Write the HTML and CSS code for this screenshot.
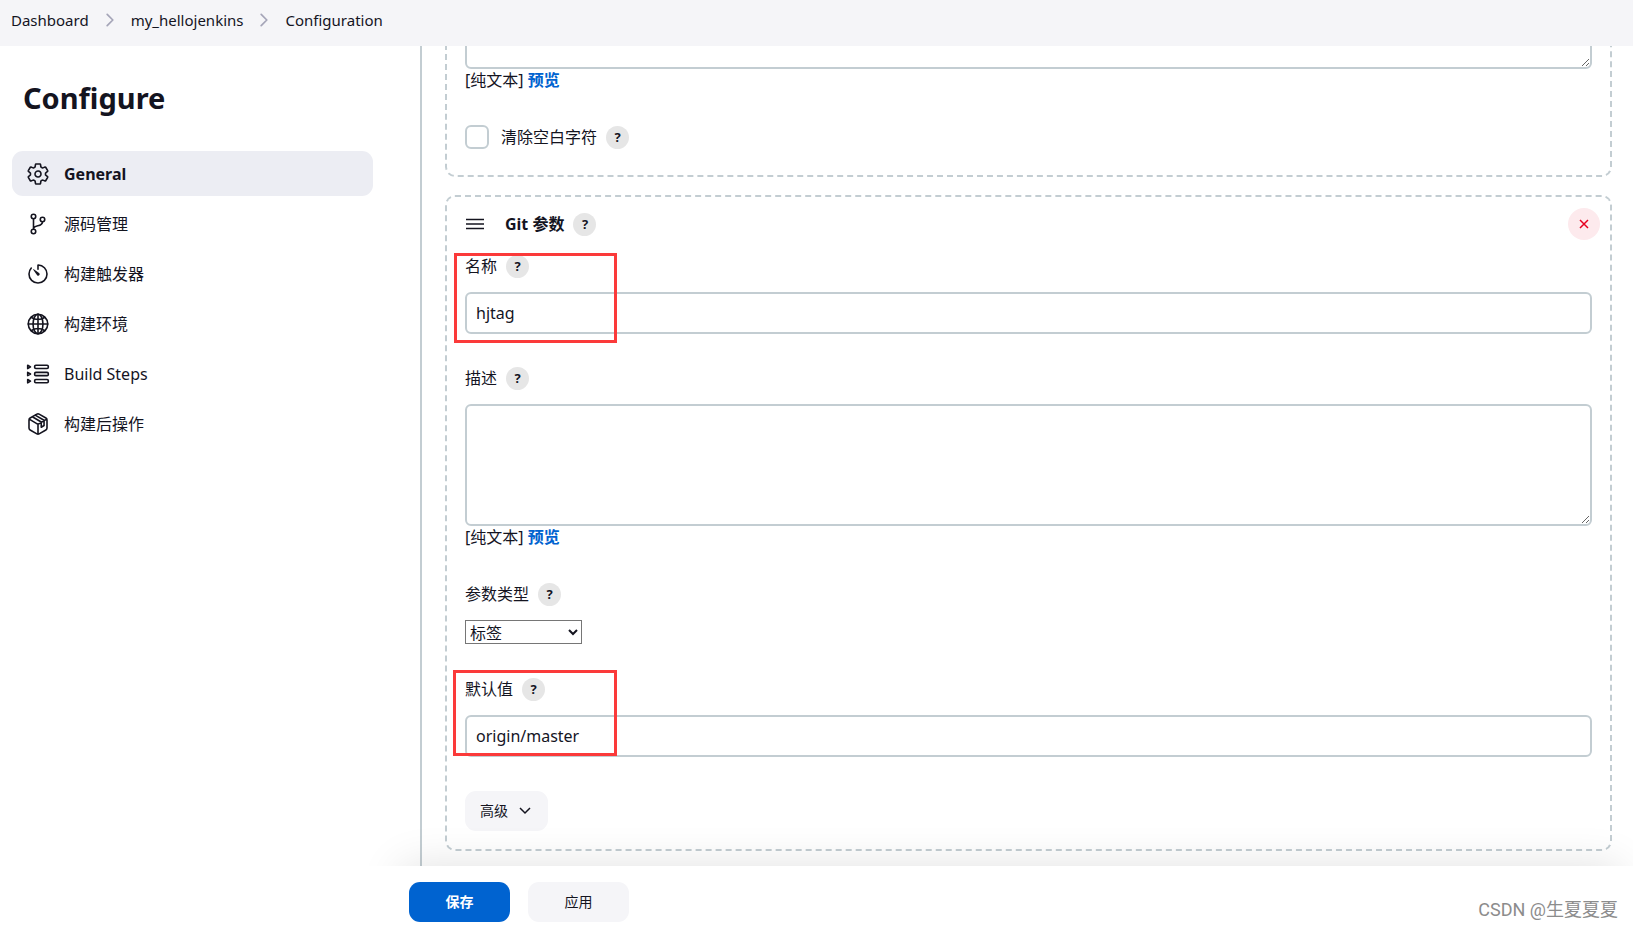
FILE: index.html
```html
<!DOCTYPE html>
<html lang="zh-CN">
<head>
<meta charset="utf-8">
<title>my_hellojenkins Config</title>
<link rel="stylesheet" href="styles.css">
</head>
<body>
<nav class="breadcrumbs" aria-label="Breadcrumb">
  <a href="#">Dashboard</a>
  <svg class="crumb-sep" viewBox="0 0 512 512" aria-hidden="true"><path d="M184 112l144 144-144 144"/></svg>
  <a href="#">my_hellojenkins</a>
  <svg class="crumb-sep" viewBox="0 0 512 512" aria-hidden="true"><path d="M184 112l144 144-144 144"/></svg>
  <a href="#">Configuration</a>
</nav>

<div class="page">
  <aside class="sidebar">
    <h1>Configure</h1>
    <nav class="tasks">
      <a class="task task-active" href="#">
        <svg class="icon" viewBox="0 0 512 512" aria-hidden="true"><path d="M262.29 192.31a64 64 0 1057.4 57.4 64.13 64.13 0 00-57.4-57.4zM416.39 256a154.34 154.34 0 01-1.53 20.79l45.21 35.46a10.81 10.81 0 012.45 13.75l-42.77 74a10.81 10.81 0 01-13.14 4.59l-44.9-18.08a16.11 16.11 0 00-15.17 1.75A164.48 164.48 0 01325 400.8a15.94 15.94 0 00-8.82 12.14l-6.73 47.89a11.08 11.08 0 01-10.68 9.17h-85.54a11.11 11.11 0 01-10.69-8.87l-6.72-47.82a16.07 16.07 0 00-9-12.22 155.3 155.3 0 01-21.46-12.57 16 16 0 00-15.11-1.71l-44.89 18.07a10.81 10.81 0 01-13.14-4.58l-42.77-74a10.8 10.8 0 012.45-13.75l38.21-30a16.05 16.05 0 006-14.08c-.36-4.17-.58-8.33-.58-12.5s.21-8.27.58-12.35a16 16 0 00-6.07-13.94l-38.19-30A10.81 10.81 0 0149.48 186l42.77-74a10.81 10.81 0 0113.14-4.59l44.9 18.08a16.11 16.11 0 0015.17-1.75A164.48 164.48 0 01187 111.2a15.94 15.94 0 008.82-12.14l6.73-47.89A11.08 11.08 0 01213.23 42h85.54a11.11 11.11 0 0110.69 8.87l6.72 47.82a16.07 16.07 0 009 12.22 155.3 155.3 0 0121.46 12.57 16 16 0 0015.11 1.71l44.89-18.07a10.81 10.81 0 0113.14 4.58l42.77 74a10.8 10.8 0 01-2.45 13.75l-38.21 30a16.05 16.05 0 00-6.05 14.08c.33 4.14.55 8.3.55 12.47z"/></svg>
        <span>General</span>
      </a>
      <a class="task" href="#">
        <svg class="icon" viewBox="0 0 512 512" aria-hidden="true"><circle cx="160" cy="96" r="48"/><circle cx="160" cy="416" r="48"/><circle cx="352" cy="160" r="48"/><path d="M160 368V144M352 208c0 128-192 48-192 160"/></svg>
        <span>源码管理</span>
      </a>
      <a class="task" href="#">
        <svg class="icon" viewBox="0 0 512 512" aria-hidden="true"><path d="M112.91 128A191.85 191.85 0 0064 254c-1.18 106.35 85.65 193.8 192 194 106.2.2 192-85.83 192-192 0-104.54-83.55-189.61-187.5-192a4.36 4.36 0 00-4.5 4.37V152"/><path class="solid" d="M233.38 278.63l-79-113a8.13 8.13 0 0111.32-11.32l113 79a32.5 32.5 0 01-37.25 53.26 33.21 33.21 0 01-8.07-7.94z"/></svg>
        <span>构建触发器</span>
      </a>
      <a class="task" href="#">
        <svg class="icon" viewBox="0 0 512 512" aria-hidden="true"><circle cx="256" cy="256" r="208"/><ellipse cx="256" cy="256" rx="106" ry="208"/><path d="M256 48v416M48 256h416M117 117c38 27 86 43 139 43s101-16 139-43M117 395c38-27 86-43 139-43s101 16 139 43"/></svg>
        <span>构建环境</span>
      </a>
      <a class="task" href="#">
        <svg class="icon" viewBox="0 0 512 512" aria-hidden="true"><path d="M36 68l60 36-60 36zM36 220l60 36-60 36zM36 372l60 36-60 36z"/><rect x="184" y="70" width="292" height="68" rx="26"/><rect x="184" y="222" width="292" height="68" rx="26"/><rect x="184" y="374" width="292" height="68" rx="26"/></svg>
        <span>Build Steps</span>
      </a>
      <a class="task" href="#">
        <svg class="icon" viewBox="0 0 512 512" aria-hidden="true"><path d="M448 341V171a48 48 0 00-24-42L280 46a48 48 0 00-48 0L88 129a48 48 0 00-24 42v170a48 48 0 0024 42l144 83a48 48 0 0048 0l144-83a48 48 0 0024-42zM69 153l187 110 187-110M256 463V263M135 102l190 112v112l60-38V177L195 67"/></svg>
        <span>构建后操作</span>
      </a>
    </nav>
  </aside>

  <main class="content">
    <section class="group group-string">
      <div class="field">
        <textarea class="text-box text-area" aria-label="描述"></textarea>
        <p class="format-note">[纯文本] <a href="#">预览</a></p>
      </div>
      <div class="check-row">
        <input class="check" type="checkbox" id="trim">
        <label for="trim">清除空白字符</label>
        <button class="help" type="button">?</button>
      </div>
    </section>

    <section class="group group-git">
      <header class="group-head">
        <svg class="drag-handle" viewBox="0 0 18 12" aria-hidden="true"><path d="M0 1.5h18M0 6h18M0 10.5h18"/></svg>
        <h2>Git 参数</h2>
        <button class="help" type="button">?</button>
        <button class="remove" type="button" aria-label="删除">
          <svg viewBox="0 0 16 16" aria-hidden="true"><path d="M4 4l8 8M12 4l-8 8"/></svg>
        </button>
      </header>
      <div class="field marked marked-name">
        <div class="label-row"><label for="name">名称</label><button class="help" type="button">?</button></div>
        <input class="text-box" type="text" id="name" value="hjtag">
      </div>
      <div class="field">
        <div class="label-row"><label for="desc">描述</label><button class="help" type="button">?</button></div>
        <textarea class="text-box text-area" id="desc"></textarea>
        <p class="format-note">[纯文本] <a href="#">预览</a></p>
      </div>
      <div class="field field-type">
        <div class="label-row"><label for="type">参数类型</label><button class="help" type="button">?</button></div>
        <select class="type-select" id="type"><option>标签</option></select>
      </div>
      <div class="field marked marked-default">
        <div class="label-row"><label for="default">默认值</label><button class="help" type="button">?</button></div>
        <input class="text-box" type="text" id="default" value="origin/master">
      </div>
      <button class="btn btn-advanced" type="button">高级
        <svg viewBox="0 0 16 16" aria-hidden="true"><path d="M3 5l5 5 5-5"/></svg>
      </button>
    </section>
  </main>
</div>

<footer class="bottom">
  <div class="bottom-bar">
    <button class="btn btn-primary" type="submit">保存</button>
    <button class="btn btn-apply" type="button">应用</button>
    <span class="credit">CSDN @生夏夏夏</span>
  </div>
</footer>
</body>
</html>
```
FILE: styles.css
```css
*,
*::before,
*::after {
  box-sizing: border-box;
}

body {
  display: flex;
  flex-direction: column;
  height: 100vh;
  margin: 0;
  overflow: hidden;
  background: #fff;
  color: #14141f;
  font: 16px/24px "Noto Sans", "Noto Sans CJK SC", sans-serif;
}

a {
  color: inherit;
  text-decoration: none;
}

button,
input,
textarea,
select {
  margin: 0;
  color: inherit;
  font: inherit;
}

h1,
h2,
p {
  margin: 0;
}

.breadcrumbs {
  display: flex;
  flex: none;
  align-items: center;
  gap: 11px;
  padding: 8px 11px 14px;
  background: #f5f5f8;
  font-size: 15px;
}

.crumb-sep {
  width: 20px;
  height: 20px;
  fill: none;
  stroke: #a5a5b8;
  stroke-width: 44;
  stroke-linecap: round;
  stroke-linejoin: round;
}

.page {
  display: flex;
  flex: 1;
  min-height: 0;
}

.sidebar {
  flex: none;
  width: 420px;
  padding: 32px 47px 0 12px;
}

h1 {
  padding-left: 11px;
  font-size: 29px;
  line-height: 40px;
}

.tasks {
  display: flex;
  flex-direction: column;
  gap: 5px;
  margin-top: 33px;
}

.task {
  display: flex;
  align-items: center;
  gap: 14px;
  height: 45px;
  padding: 0 14px;
  border-radius: 11px;
}

.task-active {
  background: #ecedf3;
  font-weight: 700;
}

.icon {
  width: 24px;
  height: 24px;
  fill: none;
  stroke: currentColor;
  stroke-width: 34;
  stroke-linecap: round;
  stroke-linejoin: round;
}

.icon .solid {
  fill: currentColor;
  stroke: none;
}

.content {
  display: flex;
  flex: 1;
  flex-direction: column;
  justify-content: flex-end;
  gap: 18px;
  min-width: 0;
  padding: 0 21px 15px 23px;
  overflow: hidden;
  border-left: 2px solid #c3cdd2;
}

.group {
  display: flex;
  flex: none;
  flex-direction: column;
  align-items: stretch;
  gap: 32px;
  padding: 11px 18px 18px;
  border: 2px dashed #c3cdd2;
  border-radius: 10px;
}

.group-string {
  padding-bottom: 26px;
}

.group-head {
  display: flex;
  align-items: center;
  gap: 9px;
  margin: 0 -8px -18px 0;
}

.drag-handle {
  width: 18px;
  height: 12px;
  margin: 0 12px 0 1px;
  fill: none;
  stroke: currentColor;
  stroke-width: 1.5;
}

h2 {
  font-size: 16px;
  line-height: 24px;
}

.help {
  width: 23px;
  height: 23px;
  padding: 0;
  border: 0;
  border-radius: 50%;
  background: #e6e6e6;
  font-size: 13px;
  font-weight: 700;
  line-height: 23px;
}

.remove {
  display: grid;
  place-items: center;
  width: 32px;
  height: 32px;
  margin-left: auto;
  padding: 0;
  border: 0;
  border-radius: 50%;
  background: #fdeaed;
  color: #e6001f;
}

.remove svg,
.btn svg {
  width: 16px;
  height: 16px;
  fill: none;
  stroke: currentColor;
  stroke-width: 1.5;
}

.field {
  display: flex;
  flex-direction: column;
}

.field-type {
  margin-bottom: 1px;
}

.label-row {
  display: flex;
  align-items: center;
  gap: 9px;
  height: 24px;
  margin-bottom: 14px;
}

.text-box {
  width: 100%;
  height: 42px;
  padding: 0 9px;
  border: 2px solid #c3cdd2;
  border-radius: 6px;
  outline: 0;
  background: #fff;
}

.text-area {
  height: 122px;
  padding: 8px 9px;
  resize: vertical;
}

.format-note {
  margin-bottom: 2px;
  line-height: 22px;
}

.format-note a {
  color: #0063d0;
  font-weight: 700;
}

.check-row {
  display: flex;
  align-items: center;
  gap: 9px;
}

.check {
  width: 24px;
  height: 24px;
  margin-right: 3px;
  border: 2px solid #c3cdd2;
  border-radius: 6px;
  background: #fff;
  appearance: none;
}

.type-select {
  align-self: flex-start;
  width: 117px;
  height: 24px;
  border: 1px solid #767676;
  border-radius: 0;
  background: #fff;
  line-height: 20px;
}

.marked {
  position: relative;
}

.marked::after {
  position: absolute;
  top: -1px;
  left: -11px;
  width: 163px;
  height: 90px;
  border: 3px solid #fb3a3a;
  content: "";
  pointer-events: none;
}

.marked-default::after {
  top: -7px;
  left: -12px;
  width: 164px;
  height: 86px;
}

.btn {
  display: flex;
  align-items: center;
  justify-content: center;
  gap: 9px;
  height: 40px;
  padding: 0;
  border: 0;
  border-radius: 11px;
  background: #f5f5f8;
  font-size: 14px;
}

.btn-advanced {
  align-self: flex-start;
  margin-top: 2px;
  padding: 0 15px;
}

.btn-primary,
.btn-apply {
  width: 101px;
}

.btn-primary {
  background: #0063d0;
  color: #fff;
  font-weight: 700;
}

.bottom {
  position: relative;
  z-index: 1;
  flex: none;
}

.bottom::before {
  position: absolute;
  z-index: -1;
  inset: 0 13px 0 401px;
  box-shadow: 0 0 44px rgba(0, 0, 0, 0.12);
  content: "";
}

.bottom-bar {
  display: flex;
  gap: 18px;
  padding: 16px 15px 7px 409px;
  background: #fff;
}

.credit {
  align-self: flex-end;
  margin-left: auto;
  color: #8c8c8c;
  font: 18px/24px Roboto, "Noto Sans CJK SC", sans-serif;
}
```
